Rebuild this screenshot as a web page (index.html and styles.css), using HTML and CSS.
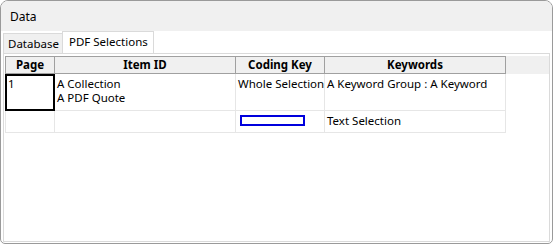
FILE: index.html
```html
<!DOCTYPE html>
<html lang="en">
<head>
    <meta charset="UTF-8">
    <title>Data</title>
    <link rel="stylesheet" href="styles.css">
</head>
<body>
    <div class="window">
        <div class="titlebar">Data</div>

        <div class="tabs">
            <div class="tab">Database</div>
            <div class="tab active">PDF Selections</div>
        </div>

        <!-- Grid panel -->
        <div class="panel">
            <div class="grid-head">
                <div class="hcell col-page">Page</div>
                <div class="hcell col-item">Item ID</div>
                <div class="hcell col-key">Coding Key</div>
                <div class="hcell col-words">Keywords</div>
                <div class="hfill"></div>
            </div>
            <div class="grid-row tall">
                <div class="cell col-page current">1</div>
                <div class="cell col-item">A Collection<br>A PDF Quote</div>
                <div class="cell col-key">Whole Selection</div>
                <div class="cell col-words">A Keyword Group : A Keyword</div>
            </div>
            <div class="grid-row">
                <div class="cell col-page"></div>
                <div class="cell col-item"></div>
                <div class="cell col-key"><span class="swatch"></span></div>
                <div class="cell col-words">Text Selection</div>
            </div>
        </div>
    </div>
</body>
</html>
```

FILE: styles.css
```css
:root {
    --frame: #9a9a9a;
    --chrome: #f0f0f0;
    --line: #dadada;
    --grid-line: #e6e6e6;
    --head-line: #a0a0a0;
}

* {
    margin: 0;
    padding: 0;
    box-sizing: border-box;
}

body {
    font-family: 'Noto Sans', 'Open Sans', sans-serif;
    font-size: 11.5px;
    color: #000;
    background: #fff;
}

.window {
    width: 553px;
    height: 244px;
    border: 1px solid var(--frame);
    border-radius: 8px 8px 5px 5px;
    background: #fff;
    display: flex;
    flex-direction: column;
    overflow: hidden;
}

.titlebar {
    height: 30px;
    background: var(--chrome);
    padding-left: 9px;
    display: flex;
    align-items: center;
    font-size: 12px;
}

/* Tabs */
.tabs {
    height: 22px;
    display: flex;
    align-items: flex-end;
    padding-left: 2px;
}

.tab {
    height: 20px;
    padding: 0 3px 0 4px;
    line-height: 20px;
    background: var(--chrome);
    border: 1px solid var(--line);
    border-bottom: none;
}

.tab.active {
    height: 22px;
    line-height: 19px;
    background: #fff;
    margin-left: -1px;
    padding: 0 5px 0 6px;
}

/* Grid */
.panel {
    flex: 1;
    margin: 0 2px 1px 2px;
    border: 1px solid var(--line);
    padding: 2px 0 0 1px;
}

.grid-head,
.grid-row {
    display: flex;
}

.grid-head {
    height: 18px;
}

.hcell {
    border: 1px solid var(--head-line);
    margin-right: -1px;
    background: var(--chrome);
    font-weight: bold;
    text-align: center;
    line-height: 16px;
}

.hfill {
    flex: 1;
    margin-left: 1px;
    background: var(--chrome);
}

.col-page { width: 50px; }
.col-item { width: 182px; }
.col-key { width: 90px; }
.col-words { width: 182px; }

.grid-row {
    height: 22px;
}

.grid-row.tall {
    height: 37px;
}

.cell {
    border: 1px solid var(--grid-line);
    border-top: none;
    margin-right: -1px;
    padding: 3px 2px 0;
    line-height: 14px;
    white-space: nowrap;
}

.cell.current {
    position: relative;
    z-index: 1;
    border: 2px solid #000;
    padding: 1px 1px 0;
}

.swatch {
    display: block;
    width: 65px;
    height: 11px;
    margin: 1px 0 0 2px;
    border: 2px solid #0000dd;
    background: #fff;
}
```
